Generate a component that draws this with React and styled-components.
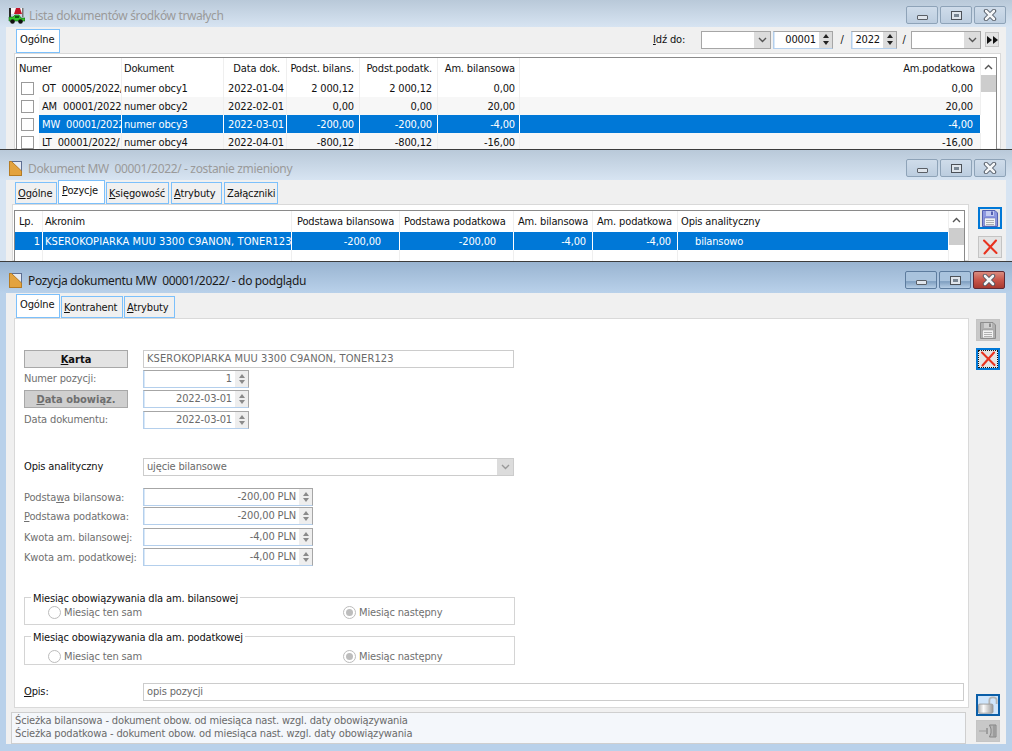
import React from 'react'
import styled, { createGlobalStyle } from 'styled-components'

const Global = createGlobalStyle`
html, body { margin: 0; padding: 0; background: #b9d1ea; }
body { font-family: "DejaVu Sans Condensed", "DejaVu Sans", sans-serif; font-size: 11px; letter-spacing: -0.15px; color: #111; }
* { box-sizing: border-box; }
u { text-underline-offset: 1px; }
`
const Page = styled.div`
width: 1012px;
height: 751px;
overflow: hidden;
display: flex;
flex-direction: column;
`
const Win = styled.div`
height: ${p => p.$h}px;
flex: none;
overflow: hidden;
display: flex;
flex-direction: column;
padding: 0 6px ${p => p.$bottom || 0}px;
background: ${p => p.$active ? '#b9d1ea' : '#d7e4f2'};
border-top: ${p => p.$first ? 'none' : '1px solid #3c3c3c'};
`
const TitleBar = styled.div`
height: ${p => p.$h}px;
flex: none;
margin: 0 -6px;
padding: ${p => p.$top}px ${p => p.$active ? 7 : 6}px 0 9px;
display: flex;
align-items: center;
gap: 6px;
background: linear-gradient(${p => p.$active ? '#99b4d1, #b9d1ea' : '#b9c9d9, #d7e4f2'});
`
const Title = styled.span`
font-family: "Noto Sans", sans-serif;
font-size: 12px;
letter-spacing: -0.35px;
color: ${p => p.$active ? '#1c1c1c' : '#9a9a9a'};
flex: 1;
white-space: pre;
`
const Controls = styled.div`
display: flex;
gap: 2px;
`
const Ctl = styled.div`
width: 32px;
height: 18px;
border: 1px solid ${p => p.$red ? '#5e2a35' : p.$active ? '#5d7c9e' : '#8ea3b8'};
border-radius: 2px;
display: flex;
align-items: center;
justify-content: center;
background: ${p => p.$red
    ? 'linear-gradient(#d98c80 0%, #c9564a 50%, #a83a30 100%)'
    : p.$active
      ? 'linear-gradient(#a9c3dd 0%, #a9c3dd 55%, #7f9fc0 60%, #b7cfe6 100%)'
      : 'linear-gradient(#cfdcea, #bccddf)'};
`
const MinGlyph = styled.span`
width: 11px;
height: 5px;
background: #dfe5ec;
border: 1px solid #5a5f66;
border-radius: 1px;
margin-top: 4px;
`
const MaxGlyph = styled.span`
width: 11px;
height: 9px;
background: #dfe5ec;
border: 1px solid #4c5158;
padding: 2px;
display: flex;
&::after { content: ""; flex: 1; background: #7a8794; }
`
const Body = styled.div`
flex: 1;
min-height: 0;
background: #f0f0f0;
display: flex;
`
const Main = styled.div`
width: ${p => p.$w}px;
flex: none;
display: flex;
flex-direction: column;
`
const Side = styled.div`
flex: 1;
display: flex;
flex-direction: column;
justify-content: space-between;
padding: ${p => p.$top}px 0 2px ${p => p.$left}px;
`
const SideGroup = styled.div`
display: flex;
flex-direction: column;
gap: ${p => p.$gap}px;
`
const SideBtn = styled.div`
width: 24px;
height: 22px;
display: flex;
align-items: center;
justify-content: center;
background: ${p => p.$bg || '#e4e4e4'};
border: ${p => p.$focus ? `2px solid ${p.$focus}` : '1px solid #c4c4c4'};
outline: ${p => p.$dots ? '1px dotted #111' : 'none'};
outline-offset: -3px;
`
const TabStrip = styled.div`
height: ${p => p.$h}px;
flex: none;
display: flex;
padding-left: ${p => p.$left}px;
gap: 1px;
`
const Tab = styled.div`
width: ${p => p.$w}px;
height: ${p => p.$height}px;
margin-top: ${p => p.$top}px;
margin-left: ${p => p.$ml || 0}px;
border: 1px solid #7cc0fb;
background: ${p => p.$on ? '#fff' : '#f0f0f0'};
padding: ${p => p.$on ? 2 : 3}px 0 0 ${p => p.$on ? 3 : 2}px;
line-height: 15px;
white-space: nowrap;
`
const GoTo = styled.div`
margin-left: auto;
margin-right: 7px;
display: flex;
align-items: center;
height: 17px;
margin-top: 4px;
`
const GoLabel = styled.span`
width: 48px;
`
const Slash = styled.span`
width: ${p => p.$w}px;
text-align: center;
`
const Panel = styled.div`
margin-left: ${p => p.$left}px;
width: ${p => p.$w}px;
height: ${p => p.$h ? `${p.$h}px` : 'auto'};
flex: ${p => p.$h ? 'none' : 1};
min-height: 0;
background: #fff;
border: 1px solid #d9d9d9;
padding: ${p => p.$pad};
`
const Table = styled.div`
display: flex;
width: ${p => p.$w}px;
height: 160px;
border: 1px solid #8a8a8a;
border-bottom: none;
background: #fff;
`
const Rows = styled.div`
flex: 1;
min-width: 0;
`
const Row = styled.div`
display: grid;
grid-template-columns: ${p => p.$cols};
height: ${p => p.$h}px;
background: ${p => p.$alt ? '#f7f7f7' : '#fff'};
`
const Cell = styled.div`
grid-column: ${p => p.$span ? `span ${p.$span}` : 'auto'};
border-right: 1px solid ${p => p.$sel ? '#fff' : '#efefef'};
background: ${p => p.$sel ? '#0078d7' : 'transparent'};
color: ${p => p.$sel ? '#fff' : '#111'};
text-align: ${p => p.$pr ? 'right' : 'left'};
padding: 0 ${p => p.$pr || 1}px 0 ${p => p.$pl ?? 2}px;
overflow: hidden;
white-space: pre;
line-height: ${p => p.$lh}px;
`
const CheckCell = styled.div`
background: #fff;
display: flex;
align-items: center;
padding-left: 4px;
`
const Box = styled.span`
width: 13px;
height: 13px;
border: 1px solid #9a9a9a;
background: #fff;
`
const Scroll = styled.div`
width: 15px;
flex: none;
background: #fff;
`
const Arrow = styled.div`
height: 17px;
display: flex;
align-items: center;
justify-content: center;
`
const Thumb = styled.div`
height: 17px;
background: #cdcdcd;
`
const WideCaps = styled.span`
letter-spacing: 0.1px;
`
const Form = styled.div`
display: flex;
flex-direction: column;
`
const FormRow = styled.div`
display: flex;
align-items: center;
height: 18px;
margin-top: ${p => p.$mt || 0}px;
`
const Label = styled.div`
width: 119px;
flex: none;
color: ${p => p.$dark ? '#111' : '#707070'};
white-space: nowrap;
margin-top: ${p => p.$up ? -2 : 0}px;
`
const CardBtn = styled.div`
width: 104px;
height: 18px;
margin-right: 15px;
flex: none;
text-align: center;
line-height: 17px;
font-weight: bold;
letter-spacing: 0;
border: 1px solid #a8a8a8;
background: ${p => p.$off ? '#cfcfcf' : '#e3e3e3'};
color: ${p => p.$off ? '#6e6e6e' : '#111'};
`
const Field = styled.div`
width: ${p => p.$w}px;
height: 18px;
background: #fff;
border: 1px solid #cccccc;
color: #6a6a6a;
padding: 0 0 0 3px;
line-height: 16px;
white-space: nowrap;
overflow: hidden;
flex: none;
`
const SpinBox = styled.div`
width: ${p => p.$w}px;
height: 18px;
flex: none;
display: flex;
background: #fff;
border: 1px solid #a6a6a6;
border-left-color: #b4cfec;
border-bottom-color: #b4cfec;
box-shadow: inset 1px 0 #d8e8f8;
`
const SpinVal = styled.div`
flex: 1;
text-align: right;
padding-right: 3px;
color: ${p => p.$dark ? '#111' : '#6a6a6a'};
line-height: 15px;
white-space: nowrap;
`
const SpinBtns = styled.div`
width: 13px;
flex: none;
background: ${p => p.$dark ? '#dcdcdc' : '#eeeeee'};
display: flex;
flex-direction: column;
align-items: center;
justify-content: space-evenly;
`
const Tri = styled.span`
width: 0;
height: 0;
border-left: 3px solid transparent;
border-right: 3px solid transparent;
${p => p.$down ? 'border-top' : 'border-bottom'}: 4px solid ${p => p.$dark ? '#222' : '#8a8a8a'};
`
const Combo = styled.div`
width: ${p => p.$w}px;
height: 18px;
flex: none;
display: flex;
background: #fff;
border: 1px solid ${p => p.$border || '#a6a6a6'};
color: #6a6a6a;
padding-left: ${p => p.$pl || 0}px;
line-height: 15px;
`
const ComboText = styled.div`
flex: 1;
`
const ComboBtn = styled.div`
width: 16px;
background: #dcdcdc;
display: flex;
align-items: center;
justify-content: center;
`
const NextBtn = styled.div`
width: 14px;
height: 15px;
margin-left: 4px;
background: #e3e3e3;
border: 1px solid #c4c4c4;
display: flex;
align-items: center;
justify-content: center;
`
const Group = styled.fieldset`
width: 491px;
height: ${p => p.$h}px;
margin: ${p => p.$mt}px 0 0 0;
padding: ${p => p.$pt}px 0 0 23px;
border: 1px solid #d4d4d4;
min-width: 0;
`
const Legend = styled.legend`
margin-left: -17px;
padding: 0 2px;
line-height: 14px;
color: #111;
`
const LegendText = styled.span`
display: block;
transform: translateY(2px);
`
const Radios = styled.div`
display: grid;
grid-template-columns: 295px 1fr;
color: #707070;
`
const RadioItem = styled.div`
display: flex;
align-items: center;
gap: 3px;
height: 14px;
`
const Radio = styled.span`
width: 13px;
height: 13px;
border-radius: 50%;
border: 1px solid #bcbcbc;
background: #fff;
display: flex;
align-items: center;
justify-content: center;
&::after {
  content: "";
  width: 7px;
  height: 7px;
  border-radius: 50%;
  background: ${p => p.$on ? '#bdbdbd' : 'transparent'};
}
`
const Status = styled.div`
width: 955px;
height: 32px;
margin: 4px 0 0 5px;
flex: none;
background: #f4f7fb;
border: 1px solid #cfcfcf;
padding: 1px 0 0 3px;
line-height: 13px;
color: #6a6a6a;
white-space: nowrap;
`
const TruckSvg = styled.svg`
flex: none;
margin: 0 -2px 0 -1px;
`
const DocSvg = styled.svg`
flex: none;
`

const CloseGlyph = () => (
  <svg width="14" height="12" viewBox="0 0 14 12">
    <path d="M3 2 L11 10 M11 2 L3 10" stroke="#4d5560" strokeWidth="4.4" strokeLinecap="round" />
    <path d="M3 2 L11 10 M11 2 L3 10" stroke="#f4f6f8" strokeWidth="2.6" strokeLinecap="round" />
  </svg>
)

const WinButtons = ({ active }) => (
  <Controls>
    <Ctl $active={active}><MinGlyph /></Ctl>
    <Ctl $active={active}><MaxGlyph /></Ctl>
    <Ctl $active={active} $red={active}><CloseGlyph /></Ctl>
  </Controls>
)

const AppIcon = () => (
  <TruckSvg width="17" height="17" viewBox="0 0 17 17">
    <rect x="1" y="1" width="2" height="10" fill="#2a2a2a" />
    <rect x="14" y="1" width="1.5" height="9" fill="#777" />
    <rect x="3" y="1" width="11" height="6" fill="#f6f6f6" />
    <path d="M6 7 L8 1 H12 L14 7 Z" fill="#c0142a" />
    <path d="M1 10 H5 L7 8 H11 L13 11 H17 V14 H1 Z" fill="#35c52e" stroke="#0d5a14" strokeWidth="0.6" />
    <rect x="7" y="9" width="4" height="2" fill="#0c5a14" />
    <circle cx="4.5" cy="14.5" r="2.3" fill="#111" />
    <circle cx="12.5" cy="14.5" r="2.3" fill="#111" />
  </TruckSvg>
)

const DocIcon = () => (
  <DocSvg width="13" height="15" viewBox="0 0 13 15">
    <rect x="0.5" y="0.5" width="12" height="14" fill="#e6eaf2" stroke="#5e6f92" />
    <path d="M0.5 0.5 L2.5 0.5 L12.5 10 V14.5 H0.5 Z" fill="#e3a33f" stroke="#b77c22" />
  </DocSvg>
)

const FloppyIcon = ({ gray }) => {
  const body = gray ? '#b0b0b0' : '#8c96e0'
  const edge = gray ? '#8d8d8d' : '#5560b0'
  return (
    <svg width="16" height="17" viewBox="0 0 16 17">
      <path d="M0.5 0.5 H13 L15.5 3 V16.5 H0.5 Z" fill={body} stroke={edge} />
      <rect x="4" y="1" width="8" height="5" fill={gray ? '#cfcfcf' : '#c4cbf2'} />
      <rect x="9" y="1.5" width="2" height="3.5" fill={edge} />
      <rect x="2.5" y="8" width="11" height="8" fill="#f3f3f3" stroke={edge} strokeWidth="0.5" />
      <path d="M4 10.5 H12 M4 12.5 H12 M4 14.5 H12" stroke="#b0b0b0" />
    </svg>
  )
}

const RedX = () => (
  <svg width="16" height="16" viewBox="0 0 16 16">
    <path d="M2 1.5 L14.5 14 M14 1.5 L2.5 14.5" stroke="#e8321e" strokeWidth="2.1" strokeLinecap="round" />
  </svg>
)

const LockIcon = () => (
  <svg width="22" height="20" viewBox="0 0 22 20">
    <defs>
      <linearGradient id="lockMetal" x1="0" x2="1">
        <stop offset="0" stopColor="#b5b5b5" />
        <stop offset="0.35" stopColor="#fbfbfb" />
        <stop offset="1" stopColor="#9a9a9a" />
      </linearGradient>
    </defs>
    <path d="M12.5 10 V5 C12.5 0.5 20.5 0.5 20.5 5 V9" fill="none" stroke="#b4b4b4" strokeWidth="2" />
    <rect x="0.5" y="9" width="16" height="10" rx="1.5" fill="url(#lockMetal)" stroke="#9c9c9c" />
  </svg>
)

const PinIcon = () => (
  <svg width="18" height="14" viewBox="0 0 18 14">
    <path d="M0 7 H7" stroke="#a5a5a5" strokeWidth="1.2" />
    <path d="M8 4 V10" stroke="#8b8b8b" strokeWidth="1.4" />
    <path d="M10.5 1 H17 V13 H10.5 L12 9 V5 Z" fill="#b5b5b5" stroke="#858585" />
    <path d="M15 1.5 V12.5" stroke="#858585" />
  </svg>
)

const Chevron = ({ up, color = '#555' }) => (
  <svg width="9" height="6" viewBox="0 0 9 6">
    <path d={up ? 'M1 5 L4.5 1.5 L8 5' : 'M1 1 L4.5 4.5 L8 1'} fill="none" stroke={color} strokeWidth="1.4" />
  </svg>
)

const Spin = ({ w, value, dark }) => (
  <SpinBox $w={w}>
    <SpinVal $dark={dark}>{value}</SpinVal>
    <SpinBtns $dark={dark}><Tri $dark={dark} /><Tri $down $dark={dark} /></SpinBtns>
  </SpinBox>
)

const COLS_LIST = '22px 83px 102px 63px 73px 78px 82px 461px'
const COLS_POS = '28px 249px 108px 114px 79px 85px 271px'
const LIST_PADS = [0, 0, 2, 5, 5, 4, 7]

const listRows = [
  ['OT  00005/2022/', 'numer obcy1', '2022-01-04', '2 000,12', '2 000,12', '0,00', '0,00'],
  ['AM  00001/2022/', 'numer obcy2', '2022-02-01', '0,00', '0,00', '20,00', '20,00'],
  ['MW  00001/2022/', 'numer obcy3', '2022-03-01', '-200,00', '-200,00', '-4,00', '-4,00'],
  ['LT  00001/2022/', 'numer obcy4', '2022-04-01', '-800,12', '-800,12', '-16,00', '-16,00'],
]

const posHeads = [
  ['Lp.', 4], ['Akronim', 2], ['Podstawa bilansowa', 5], ['Podstawa podatkowa', 4],
  ['Am. bilansowa', 4], ['Am. podatkowa', 4], ['Opis analityczny', 3],
]

const VScroll = () => (
  <Scroll>
    <Arrow><Chevron up /></Arrow>
    <Thumb />
  </Scroll>
)

const ListWindow = () => (
  <Win $h={149} $first>
    <TitleBar $h={27} $top={3}>
      <AppIcon />
      <Title>Lista dokumentów środków trwałych</Title>
      <WinButtons />
    </TitleBar>
    <Body>
      <Main $w={1000}>
        <TabStrip $h={26} $left={10}>
          <Tab $on $w={44} $height={24} $top={2}>Ogólne</Tab>
          <GoTo>
            <GoLabel><u>I</u>dź do:</GoLabel>
            <Combo $w={70}><ComboText /><ComboBtn><Chevron /></ComboBtn></Combo>
            <Slash $w={2} />
            <Spin w={60} value="00001" dark />
            <Slash $w={18}>/</Slash>
            <Spin w={46} value="2022" dark />
            <Slash $w={14}>/</Slash>
            <Combo $w={70}><ComboText /><ComboBtn><Chevron /></ComboBtn></Combo>
            <NextBtn>
              <svg width="11" height="8" viewBox="0 0 11 8"><path d="M0 0 L5 4 L0 8 Z M6 0 L11 4 L6 8 Z" fill="#111" /></svg>
            </NextBtn>
          </GoTo>
        </TabStrip>
        <Panel $left={8} $w={987} $pad="3px 0 0 1px">
          <Table $w={981}>
            <Rows>
              <Row $cols={COLS_LIST} $h={21}>
                <Cell $span={2} $lh={21}>Numer</Cell>
                <Cell $lh={21}>Dokument</Cell>
                <Cell $lh={21} $pr={6}>Data dok.</Cell>
                <Cell $lh={21} $pr={5}>Podst. bilans.</Cell>
                <Cell $lh={21} $pr={5}>Podst.podatk.</Cell>
                <Cell $lh={21} $pr={4}>Am. bilansowa</Cell>
                <Cell $lh={21} $pr={5}>Am.podatkowa</Cell>
              </Row>
              {listRows.map((r, i) => (
                <Row key={r[1]} $cols={COLS_LIST} $h={18} $alt={i % 2 === 1}>
                  <CheckCell><Box /></CheckCell>
                  {r.map((v, j) => (
                    <Cell key={j} $sel={i === 2} $lh={19} $pr={LIST_PADS[j]} $pl={j === 0 ? 3 : 2}>{v}</Cell>
                  ))}
                </Row>
              ))}
            </Rows>
            <VScroll />
          </Table>
        </Panel>
      </Main>
    </Body>
  </Win>
)

const DocWindow = () => (
  <Win $h={112}>
    <TitleBar $h={30} $top={6}>
      <DocIcon />
      <Title>Dokument MW  00001/2022/ - zostanie zmieniony</Title>
      <WinButtons />
    </TitleBar>
    <Body>
      <Main $w={963}>
        <TabStrip $h={24} $left={9}>
          <Tab $w={42} $height={22} $top={2}><u>O</u>gólne</Tab>
          <Tab $on $w={47} $height={24} $top={0}><u>P</u>ozycje</Tab>
          <Tab $w={63} $height={22} $top={2}><u>K</u>sięgowość</Tab>
          <Tab $w={51} $height={22} $top={2} $ml={1}><u>A</u>trybuty</Tab>
          <Tab $w={54} $height={22} $top={2} $ml={1}>Załączniki</Tab>
        </TabStrip>
        <Panel $left={6} $w={957} $pad="5px 0 0 1px">
          <Table $w={951}>
            <Rows>
              <Row $cols={COLS_POS} $h={21}>
                {posHeads.map(([t, pl]) => <Cell key={t} $lh={22} $pl={pl}>{t}</Cell>)}
              </Row>
              <Row $cols={COLS_POS} $h={18}>
                <Cell $sel $lh={19} $pr={2}>1</Cell>
                <Cell $sel $lh={19}><WideCaps>KSEROKOPIARKA MUU 3300 C9ANON, TONER123</WideCaps></Cell>
                <Cell $sel $lh={19} $pr={18}>-200,00</Cell>
                <Cell $sel $lh={19} $pr={17}>-200,00</Cell>
                <Cell $sel $lh={19} $pr={6}>-4,00</Cell>
                <Cell $sel $lh={19} $pr={6}>-4,00</Cell>
                <Cell $sel $lh={19} $pl={17}>bilansowo</Cell>
              </Row>
              <Row $cols={COLS_POS} $h={18}>
                {posHeads.map(([t]) => <Cell key={t} $lh={17} />)}
              </Row>
            </Rows>
            <VScroll />
          </Table>
        </Panel>
      </Main>
      <Side $top={27} $left={9}>
        <SideGroup $gap={7}>
          <SideBtn $focus="#0078d7"><FloppyIcon /></SideBtn>
          <SideBtn><RedX /></SideBtn>
        </SideGroup>
      </Side>
    </Body>
  </Win>
)

const amounts = [
  [<>Podsta<u>w</u>a bilansowa:</>, '-200,00 PLN', 12],
  [<><u>P</u>odstawa podatkowa:</>, '-200,00 PLN', 1],
  ['Kwota am. bilansowej:', '-4,00 PLN', 3],
  ['Kwota am. podatkowej:', '-4,00 PLN', 2],
]

const MonthGroup = ({ title, mt, h, pt }) => (
  <Group $mt={mt} $h={h} $pt={pt}>
    <Legend><LegendText>{title}</LegendText></Legend>
    <Radios>
      <RadioItem><Radio />Miesiąc ten sam</RadioItem>
      <RadioItem><Radio $on />Miesiąc następny</RadioItem>
    </Radios>
  </Group>
)

const PositionWindow = () => (
  <Win $h={490} $active $bottom={7}>
    <TitleBar $h={31} $top={5} $active>
      <DocIcon />
      <Title $active>Pozycja dokumentu MW  00001/2022/ - do podglądu</Title>
      <WinButtons active />
    </TitleBar>
    <Body>
      <Main $w={963}>
        <TabStrip $h={25} $left={10}>
          <Tab $on $w={44} $height={24} $top={1}>Ogólne</Tab>
          <Tab $w={62} $height={22} $top={3}><u>K</u>ontrahent</Tab>
          <Tab $w={51} $height={22} $top={3}><u>A</u>trybuty</Tab>
        </TabStrip>
        <Panel $left={8} $w={955} $h={390} $pad="31px 0 0 9px">
          <Form>
            <FormRow>
              <CardBtn><u>K</u>arta</CardBtn>
              <Field $w={371}><WideCaps>KSEROKOPIARKA MUU 3300 C9ANON, TONER123</WideCaps></Field>
            </FormRow>
            <FormRow $mt={2}>
              <Label $up>Numer pozycji:</Label>
              <Spin w={106} value="1" />
            </FormRow>
            <FormRow $mt={2}>
              <CardBtn $off><u>D</u>ata obowiąz.</CardBtn>
              <Spin w={106} value="2022-03-01" />
            </FormRow>
            <FormRow $mt={3}>
              <Label $up>Data dokumentu:</Label>
              <Spin w={106} value="2022-03-01" />
            </FormRow>
            <FormRow $mt={29}>
              <Label $dark $up>Opis analityczny</Label>
              <Combo $w={371} $border="#cccccc" $pl={3}>
                <ComboText>ujęcie bilansowe</ComboText>
                <ComboBtn><Chevron color="#999" /></ComboBtn>
              </Combo>
            </FormRow>
            {amounts.map(([label, value, gap]) => (
              <FormRow key={gap} $mt={gap}>
                <Label>{label}</Label>
                <Spin w={170} value={value} />
              </FormRow>
            ))}
            <MonthGroup title="Miesiąc obowiązywania dla am. bilansowej" mt={24} h={35} pt={1} />
            <MonthGroup title="Miesiąc obowiązywania dla am. podatkowej" mt={4} h={36} pt={6} />
            <FormRow $mt={18}>
              <Label $dark $up><u>O</u>pis:</Label>
              <Field $w={821}>opis pozycji</Field>
            </FormRow>
          </Form>
        </Panel>
        <Status>
          Ścieżka bilansowa - dokument obow. od miesiąca nast. wzgl. daty obowiązywania<br />
          Ścieżka podatkowa - dokument obow. od miesiąca nast. wzgl. daty obowiązywania
        </Status>
      </Main>
      <Side $top={26} $left={7}>
        <SideGroup $gap={7}>
          <SideBtn $bg="#c8c8c8"><FloppyIcon gray /></SideBtn>
          <SideBtn $focus="#0078d7" $dots><RedX /></SideBtn>
        </SideGroup>
        <SideGroup $gap={4}>
          <SideBtn $focus="#0a5ea8" $bg="#cfe5fb"><LockIcon /></SideBtn>
          <SideBtn $bg="#c8c8c8"><PinIcon /></SideBtn>
        </SideGroup>
      </Side>
    </Body>
  </Win>
)

export default function App() {
  return (
    <Page>
      <Global />
      <ListWindow />
      <DocWindow />
      <PositionWindow />
    </Page>
  )
}
